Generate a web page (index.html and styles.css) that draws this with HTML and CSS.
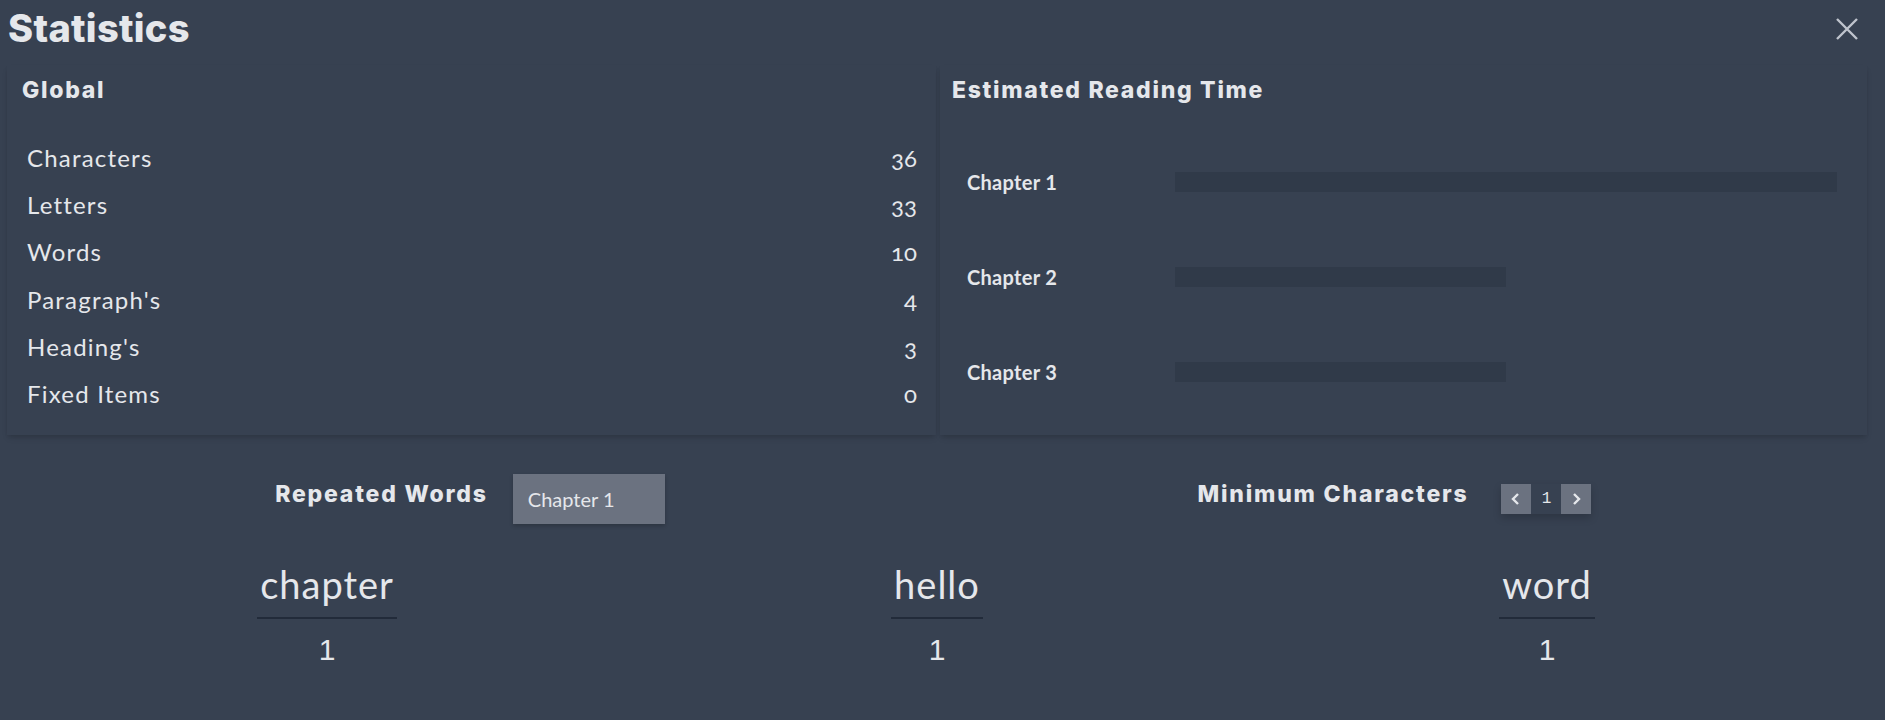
FILE: index.html
```html
<!DOCTYPE html>
<html lang="en">
<head>
<meta charset="utf-8">
<title>Statistics</title>
<link rel="stylesheet" href="styles.css">
</head>
<body>
<div class="page">
  <header class="top">
    <h1 class="title">Statistics</h1>
    <button class="close" aria-label="Close">
      <svg width="24" height="24" viewBox="0 0 24 24"><path d="M2 2 L22 22 M22 2 L2 22" stroke="currentColor" stroke-width="2.4" fill="none"/></svg>
    </button>
  </header>

  <section class="cards">
    <div class="card card-global">
      <h2 class="card-title">Global</h2>
      <ul class="stats">
        <li class="stat"><span>Characters</span><span class="num">36</span></li>
        <li class="stat"><span>Letters</span><span class="num">33</span></li>
        <li class="stat"><span>Words</span><span class="num">10</span></li>
        <li class="stat"><span>Paragraph's</span><span class="num">4</span></li>
        <li class="stat"><span>Heading's</span><span class="num">3</span></li>
        <li class="stat"><span>Fixed Items</span><span class="num">0</span></li>
      </ul>
    </div>
    <div class="card card-time">
      <h2 class="card-title">Estimated Reading Time</h2>
      <ul class="chapters">
        <li class="chapter"><span class="chapter-name">Chapter 1</span><div class="track"><div class="bar" style="width:100%"></div></div></li>
        <li class="chapter"><span class="chapter-name">Chapter 2</span><div class="track"><div class="bar" style="width:50%"></div></div></li>
        <li class="chapter"><span class="chapter-name">Chapter 3</span><div class="track"><div class="bar" style="width:50%"></div></div></li>
      </ul>
    </div>
  </section>

  <section class="repeated">
    <div class="controls">
      <div class="control control-left">
        <h3 class="control-title">Repeated Words</h3>
        <div class="select">Chapter 1</div>
      </div>
      <div class="control control-right">
        <h3 class="control-title">Minimum Characters</h3>
        <div class="stepper">
          <button class="step"><svg width="14" height="14" viewBox="0 0 14 14"><path d="M9 2 L4 7 L9 12" stroke="currentColor" stroke-width="2.4" fill="none"/></svg></button>
          <span class="step-value">1</span>
          <button class="step"><svg width="14" height="14" viewBox="0 0 14 14"><path d="M5 2 L10 7 L5 12" stroke="currentColor" stroke-width="2.4" fill="none"/></svg></button>
        </div>
      </div>
    </div>
    <div class="words">
      <div class="word"><span class="word-text">chapter</span><span class="word-count">1</span></div>
      <div class="word"><span class="word-text">hello</span><span class="word-count">1</span></div>
      <div class="word"><span class="word-text">word</span><span class="word-count">1</span></div>
    </div>
  </section>
</div>
</body>
</html>
```

FILE: styles.css
```css
* { box-sizing: border-box; }
html, body { margin: 0; padding: 0; }
body {
  background: #374151;
  color: #e5e7eb;
  font-family: "Lato", "Noto Sans", sans-serif;
  width: 1885px;
  height: 720px;
  overflow: hidden;
}

.top {
  display: flex;
  justify-content: space-between;
  align-items: flex-start;
  height: 65px;
  padding: 0 26px 0 8px;
}
.title {
  margin: 0;
  padding-top: 7px;
  font-family: "Inter", sans-serif;
  font-weight: 800;
  font-size: 38px;
  line-height: 42px;
  letter-spacing: 0.3px;
  color: #e5e7eb;
}
.close {
  margin-top: 17px;
  padding: 0;
  border: 0;
  background: none;
  color: #bfc4cd;
  width: 24px;
  height: 24px;
  display: flex;
}

.cards {
  display: grid;
  grid-template-columns: 929px 927px;
  column-gap: 4px;
  padding-left: 7px;
  height: 370px;
}
.card {
  background: #374151;
  box-shadow: 0 4px 6px -1px rgba(0,0,0,0.12), 0 2px 4px -1px rgba(0,0,0,0.07);
}
.card-title {
  margin: 0;
  padding-top: 9px;
  font-family: "Inter", sans-serif;
  font-weight: 800;
  font-size: 23px;
  line-height: 32px;
  height: 42px;
  letter-spacing: 1.7px;
}
.card-global .card-title { padding-left: 15px; }
.card-time .card-title { padding-left: 12px; }

.stats {
  list-style: none;
  margin: 0;
  padding: 27px 19px 0 20px;
}
.stat {
  display: flex;
  justify-content: space-between;
  font-size: 24px;
  line-height: 47.2px;
  height: 47.2px;
}
.stat span:first-child { letter-spacing: 1.2px; }
.num { font-variant-numeric: oldstyle-nums; }

.chapters {
  list-style: none;
  margin: 0;
  padding: 27px 30px 0 27px;
}
.chapter {
  display: flex;
  align-items: center;
  height: 95px;
}
.chapter-name {
  width: 208px;
  flex: none;
  font-weight: 700;
  font-size: 20px;
  letter-spacing: 0.3px;
}
.track { flex: 1; height: 20px; }
.bar { height: 20px; background: #303a49; }

.repeated { padding: 0 33px 0 22px; }
.controls {
  display: grid;
  grid-template-columns: 1fr 1fr;
  height: 127px;
  align-items: center;
}
.control {
  display: flex;
  align-items: center;
  justify-content: center;
}
.control-left { gap: 25px; padding-right: 19px; }
.control-right { gap: 33px; }
.control-title {
  margin: 0 0 10px;
  font-family: "Inter", sans-serif;
  font-weight: 800;
  font-size: 23px;
  letter-spacing: 1.8px;
}
.select {
  width: 152px;
  height: 50px;
  background: #6b7280;
  padding-left: 15px;
  display: flex;
  align-items: center;
  font-size: 20px;
  box-shadow: 0 2px 4px rgba(0,0,0,0.2);
}
.stepper {
  display: flex;
  align-items: center;
  box-shadow: 0 4px 8px rgba(0,0,0,0.18);
}
.step {
  width: 30px;
  height: 30px;
  padding: 0;
  border: 0;
  background: #6b7280;
  color: #e5e7eb;
  display: flex;
  align-items: center;
  justify-content: center;
}
.step-value {
  width: 30px;
  text-align: center;
  font-family: "Liberation Mono", monospace;
  font-size: 16px;
}

.words {
  display: grid;
  grid-template-columns: repeat(3, 1fr);
}
.word {
  display: flex;
  flex-direction: column;
  align-items: center;
}
.word-text {
  font-size: 38px;
  line-height: 44px;
  letter-spacing: 1px;
  padding: 0 3px 11px;
  border-bottom: 2px solid #222b3a;
}
.word-count {
  margin-top: 9px;
  font-family: "Liberation Sans", sans-serif;
  font-size: 30px;
  line-height: 44px;
}
```
